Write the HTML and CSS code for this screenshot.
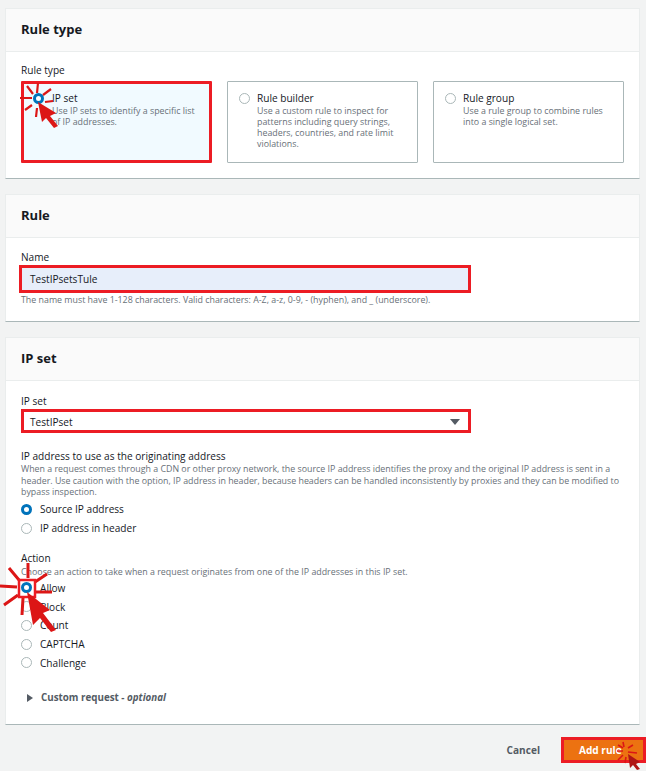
FILE: index.html
```html
<!DOCTYPE html>
<html lang="en">
<head>
<meta charset="utf-8">
<title>Add rule</title>
<link rel="stylesheet" href="styles.css">
</head>
<body>
<section class="card card-type">
  <h2 class="card-head">Rule type</h2>
  <div class="card-body">
    <div class="label">Rule type</div>
    <div class="tiles">
      <div class="tile tile-on">
        <span class="radio radio-on"></span>
        <div><div class="tile-title">IP set</div><div class="hint">Use IP sets to identify a specific list of IP addresses.</div></div>
      </div>
      <div class="tile">
        <span class="radio"></span>
        <div><div class="tile-title">Rule builder</div><div class="hint">Use a custom rule to inspect for patterns including query strings, headers, countries, and rate limit violations.</div></div>
      </div>
      <div class="tile">
        <span class="radio"></span>
        <div><div class="tile-title">Rule group</div><div class="hint">Use a rule group to combine rules into a single logical set.</div></div>
      </div>
    </div>
  </div>
</section>

<section class="card card-rule">
  <h2 class="card-head">Rule</h2>
  <div class="card-body">
    <div class="label">Name</div>
    <div class="input">TestIPsetsTule</div>
    <div class="hint name-hint">The name must have 1-128 characters. Valid characters: A-Z, a-z, 0-9, - (hyphen), and _ (underscore).</div>
  </div>
</section>

<section class="card card-ip">
  <h2 class="card-head">IP set</h2>
  <div class="card-body">
    <div class="label">IP set</div>
    <div class="select"><span>TestIPset</span><span class="caret"></span></div>
    <div class="label origin-label">IP address to use as the originating address</div>
    <div class="hint origin-hint">When a request comes through a CDN or other proxy network, the source IP address identifies the proxy and the original IP address is sent in a header. Use caution with the option, IP address in header, because headers can be handled inconsistently by proxies and they can be modified to bypass inspection.</div>
    <div class="options">
      <div class="option"><span class="radio radio-on"></span>Source IP address</div>
      <div class="option"><span class="radio"></span>IP address in header</div>
    </div>
    <div class="label action-label">Action</div>
    <div class="hint action-hint">Choose an action to take when a request originates from one of the IP addresses in this IP set.</div>
    <div class="options options-action">
      <div class="option"><span class="radio radio-on"></span>Allow</div>
      <div class="option"><span class="radio"></span>Block</div>
      <div class="option"><span class="radio"></span>Count</div>
      <div class="option"><span class="radio"></span>CAPTCHA</div>
      <div class="option"><span class="radio"></span>Challenge</div>
    </div>
    <div class="expand"><span class="tri"></span><b>Custom request - <i>optional</i></b></div>
  </div>
</section>

<footer class="actions">
  <span class="cancel">Cancel</span>
  <span class="primary">Add rule</span>
</footer>

<svg class="marks" width="646" height="771" viewBox="0 0 646 771">
  <g class="ray ray-a">
    <path d="M38 83l-1 10M27 86l6 8M51 89l-8 6M20 98h12M45 102l8-1M25 110l7-5M36 117l1-9"/>
  </g>
  <path class="arrow" d="M38 102l18 11-6 3 8 10-4 2-8-10-4 4z"/>
  <g class="ray ray-b">
    <path d="M28 563v15M9 568l10 12M47 574l-12 8M0 586l17 1M35 592h17M4 605l14-10M22 615l1-17"/>
    <rect x="19" y="580" width="16" height="17"/>
  </g>
  <path class="arrow" d="M27 592l23 18-7 3 13 17-5 2-11-14-7 7z"/>
  <g class="ray ray-c">
    <path d="M623 742l1 5M633 745l-5 3M617 751h6M628 752l9 1M618 760l5-5M625 763l1-6M618 745l5 3"/>
  </g>
  <path class="arrow arrow-c" d="M628 754l12 8-4 2 4 5-3 1-4-5-3 3z"/>
</svg>
</body>
</html>
```
FILE: styles.css
```css
* { box-sizing: border-box; }
html, body { margin: 0; }
body {
  position: relative;
  width: 646px;
  height: 771px;
  overflow: hidden;
  padding: 8px 0 0 5px;
  background: #f2f3f3;
  color: #16191f;
  font-family: "Open Sans", "Noto Sans", sans-serif;
  font-size: 10.1px;
  line-height: 14px;
}
.card {
  width: 635px;
  background: #fff;
  border: 1px solid #eaeded;
  border-bottom: 1px solid #aab7b8;
  margin-bottom: 15px;
}
.card-type { height: 171px; }
.card-rule { height: 128px; }
.card-ip { height: 388px; margin-bottom: 0; }
.card-head {
  margin: 0;
  height: 43px;
  padding: 0 15px 2px;
  display: flex;
  align-items: center;
  background: #fafafa;
  border-bottom: 1px solid #eaeded;
  font-size: 13px;
  font-weight: 700;
}
.card-body { padding: 12px 15px 0; }
.card-type .card-body { padding-top: 11px; }
.card-ip .card-body { padding-top: 13px; }
.label { line-height: 14px; }
.hint { font-size: 8.85px; line-height: 11px; color: #687078; }
.tiles { display: flex; gap: 15px; margin-top: 4px; }
.tile {
  flex: 0 0 191px;
  height: 82px;
  display: flex;
  gap: 7px;
  padding: 10px 6px 9px 11px;
  border: 1px solid #aab7b8;
  border-radius: 1px;
}
.tile-on {
  gap: 8px;
  padding: 8px 4px 7px 9px;
  background: #f1faff;
  border: 3px solid #ec1c24;
}
.tile-title { line-height: 13px; margin-bottom: 1px; }
.radio {
  flex: none;
  width: 11px;
  height: 11px;
  margin-top: 1px;
  border: 1px solid #aab7b8;
  border-radius: 50%;
  background: #fff;
}
.radio-on { border: 3.5px solid #0073bb; }
.input, .select {
  display: flex;
  align-items: center;
  justify-content: space-between;
  border: 3px solid #ec1c24;
  padding: 0 6px;
}
.input {
  width: 452px;
  height: 28px;
  margin: 1px 0 0 -2px;
  padding-left: 8px;
  background: #e7eefa;
}
.name-hint { margin-top: 2px; }
.select { width: 450px; height: 24px; margin-top: 1px; padding-top: 1px; }
.caret {
  width: 0;
  height: 0;
  margin: 1px 2px 0 0;
  border-left: 5px solid transparent;
  border-right: 5px solid transparent;
  border-top: 6px solid #545b64;
}
.origin-label { margin-top: 16px; }
.origin-hint { margin-top: 1px; line-height: 11.5px; }
.options { margin-top: 1.5px; }
.option { display: flex; align-items: center; gap: 8px; height: 18.75px; }
.option .radio { margin: 0; }
.action-label { margin-top: 13px; }
.action-hint { margin-top: 2px; }
.options-action { margin-top: 1px; }
.expand { display: flex; align-items: center; gap: 8px; margin: 19px 0 0 6px; color: #545b64; font-size: 9.8px; }
.tri {
  width: 0;
  height: 0;
  border-top: 4px solid transparent;
  border-bottom: 4px solid transparent;
  border-left: 6px solid #545b64;
}
.actions { display: flex; justify-content: flex-end; align-items: center; gap: 21px; padding-top: 12px; }
.cancel { color: #545b64; font-weight: 700; }
.primary {
  width: 85px;
  height: 26px;
  display: flex;
  align-items: center;
  padding-left: 15px;
  background: #ec7211;
  border: 3px solid #ec1c24;
  color: #fff;
  font-weight: 700;
}
.marks { position: absolute; left: 0; top: 0; }
.ray { fill: none; stroke: #dc1616; }
.ray-a { stroke-width: 2.2; }
.ray-b { stroke-width: 3; }
.ray-b rect { stroke: #ec1c24; stroke-width: 2.5; }
.ray-c { stroke-width: 1.6; }
.arrow { fill: #dc1616; }
.arrow-c { fill: #b01515; }
```
